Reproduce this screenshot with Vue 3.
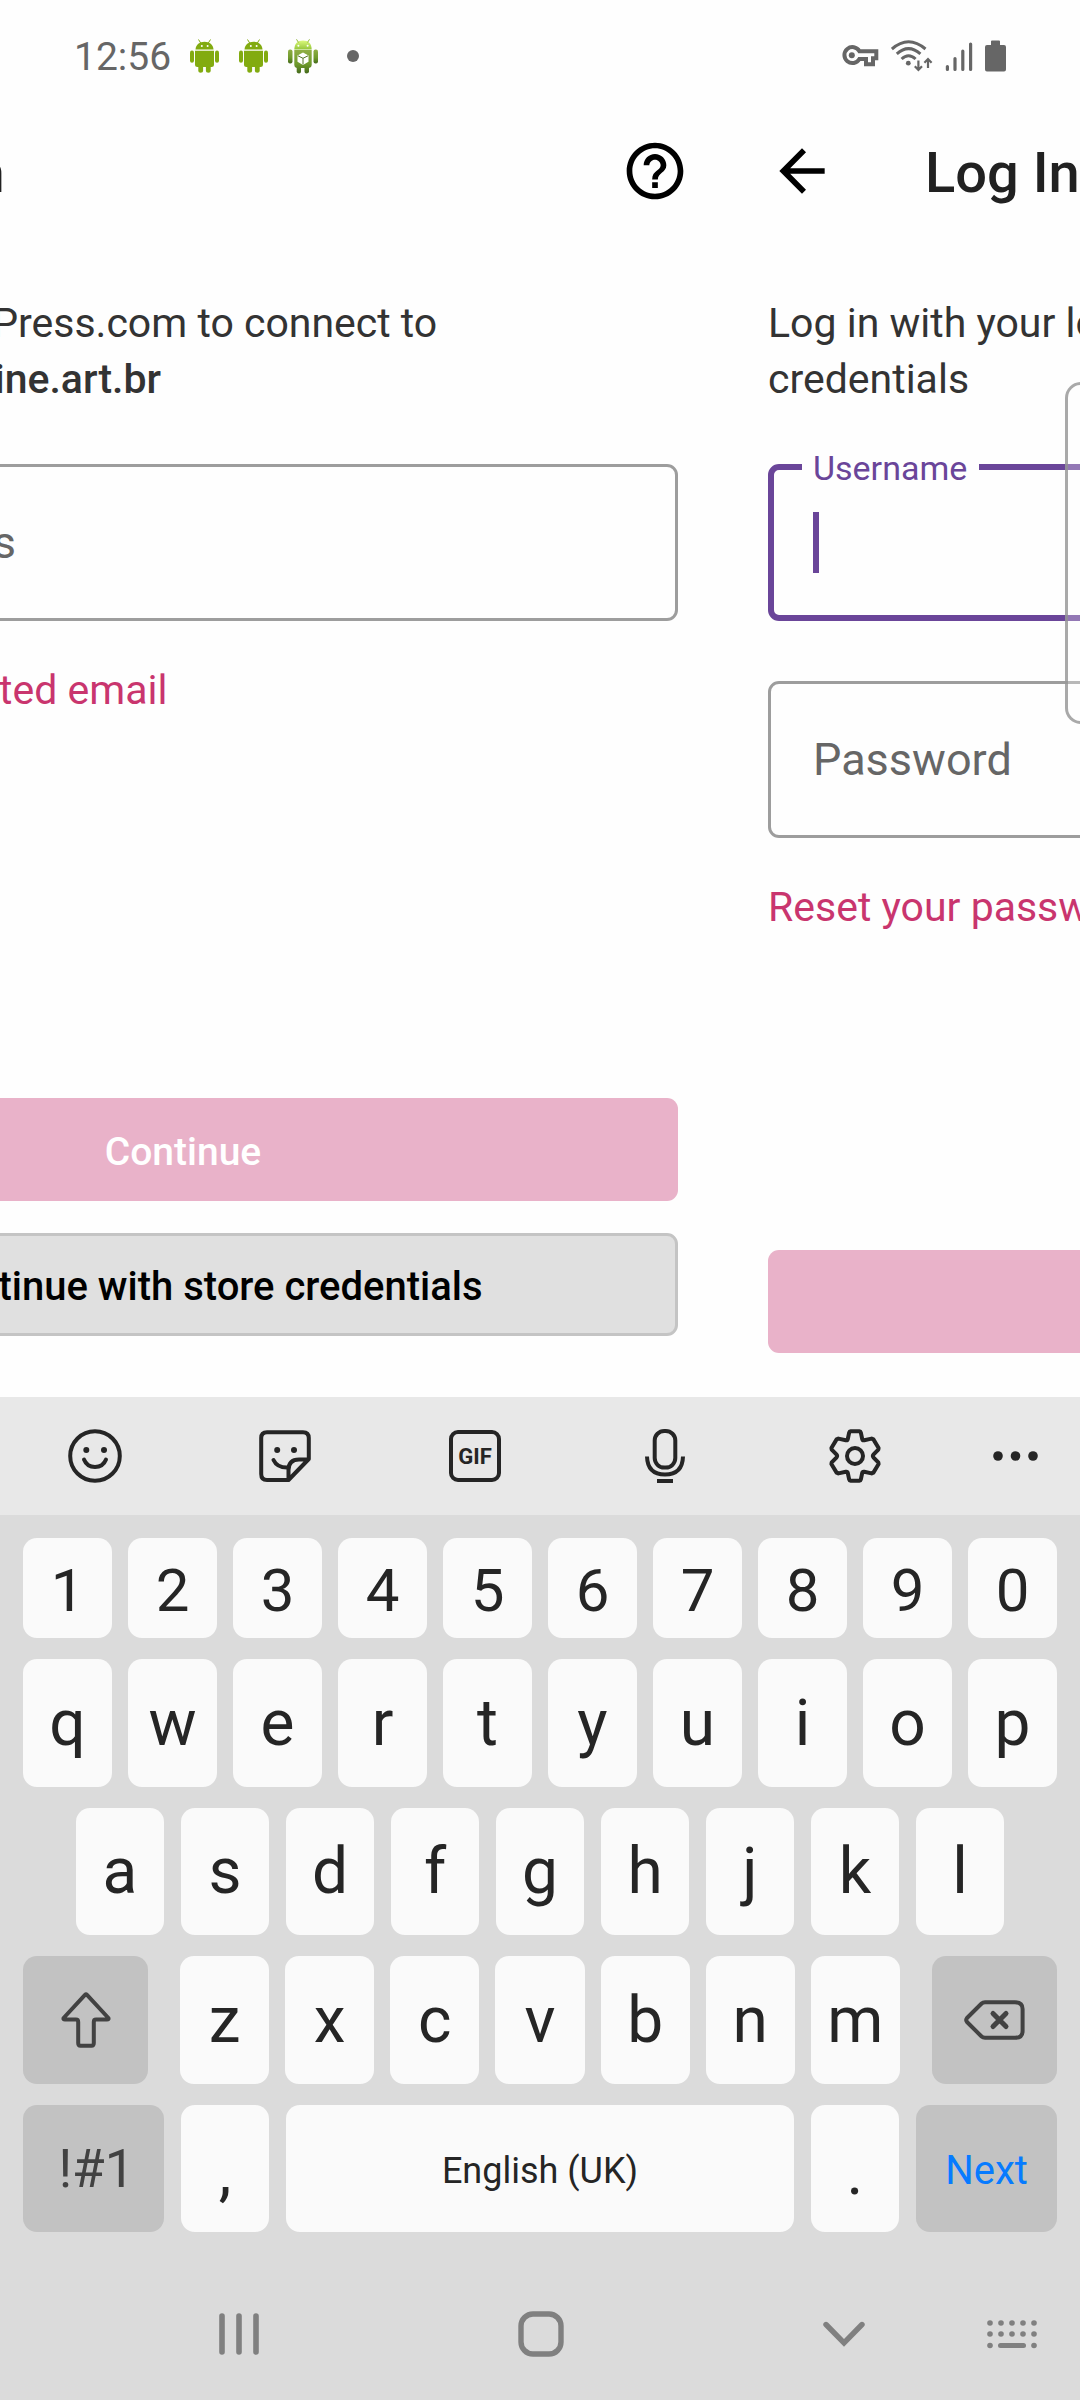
<script setup>
import { ref } from 'vue'

const email = ref('')
const username = ref('')
const password = ref('')

const digits = '1234567890'.split('')
const topRow = 'qwertyuiop'.split('')
const homeRow = 'asdfghjkl'.split('')
const bottomRow = 'zxcvbnm'.split('')
const dotColumns = [3, 14, 25, 36, 47]
</script>

<template>
  <div class="phone">
    <header class="status">
      <time class="clock">12:56</time>
      <svg v-for="n in 2" :key="n" class="droid" viewBox="0 0 30 35" aria-hidden="true">
        <g fill="#82ab10">
          <path d="M5.5 10.6C5.8 5.5 9.5 2.7 14.5 2.7S23.2 5.5 23.5 10.6z" />
          <path d="M5 11.8H24V25.5Q24 28 21.5 28H20.7V32Q20.7 33.8 18.3 33.8T15.9 32V28H13.1V32Q13.1 33.8 10.7 33.8T8.3 32V28H7.5Q5 28 5 25.5z" />
          <rect x="0" y="11.4" width="4" height="12.4" rx="2" />
          <rect x="25" y="11.4" width="4" height="12.4" rx="2" />
        </g>
        <path d="M8.5 .5L11 4.5M20.5 .5L18 4.5" stroke="#82ab10" stroke-width="1" />
        <circle cx="11.8" cy="6.9" r="1" fill="#fff" /><circle cx="17.6" cy="6.9" r="1" fill="#fff" />
      </svg>
      <svg class="droid" viewBox="0 0 30 35" aria-hidden="true">
        <defs>
          <linearGradient id="droid-head" x1="0" y1="0" x2="0" y2="1"><stop offset="0" stop-color="#dcfa7c" /><stop offset="1" stop-color="#94c53a" /></linearGradient>
          <linearGradient id="droid-body" x1="0" y1="0" x2="0" y2="1"><stop offset="0" stop-color="#8fae45" /><stop offset=".6" stop-color="#6f9a2c" /><stop offset="1" stop-color="#456a1c" /></linearGradient>
        </defs>
        <path d="M6.3 10.6C6.5 4.5 9.5 1.5 15 1.5S23.5 4.5 23.7 10.6z" fill="url(#droid-head)" />
        <path d="M6.3 11H23.7V26Q23.7 28.5 21 29V33Q20.5 34.4 18.5 34.4T16.5 32.5V29H13V32.5Q13 34.4 11 34.4T8.7 33V29Q6.3 28.5 6.3 26z" fill="url(#droid-body)" />
        <rect x="0" y="10.5" width="4.5" height="14" rx="2" fill="url(#droid-body)" />
        <rect x="25.5" y="10.5" width="4.5" height="14" rx="2" fill="url(#droid-body)" />
        <path d="M8.5 .3L10.5 3.5M21.5 .3L19.5 3.5" stroke="#94b93c" stroke-width="1" />
        <path d="M15 13.5L20.5 16.5V22.8L15 26L9.5 22.8V16.5z" fill="#fff" />
        <path d="M10 16.8L15 19.3L20 16.8M15 19.3V25.5" stroke="#55752a" stroke-width="1" fill="none" />
        <circle cx="10.4" cy="6.8" r="1" fill="#fff" /><circle cx="19.6" cy="6.8" r="1" fill="#fff" />
      </svg>
      <i class="more-dot"></i>
      <div class="signals">
        <svg width="37" height="22" viewBox="0 0 37 22" aria-hidden="true">
          <path d="M17.4 6.2A8 8 0 1 0 17.4 14H24V19.2H31V13.2H34.3V6.2z" fill="none" stroke="#666" stroke-width="4" />
          <circle cx="9.8" cy="10.2" r="3" fill="#666" />
        </svg>
        <svg width="42" height="32" viewBox="0 0 42 32" fill="none" stroke="#666" aria-hidden="true">
          <g stroke-width="3"><path d="M.9 9Q17.5 -5.5 34.5 9" /><path d="M5.8 13.8Q17.5 3.5 29.4 13.8" /><path d="M10.6 19Q17.5 12.5 24.6 19" /></g>
          <circle cx="17.3" cy="23.2" r="2.4" fill="#666" stroke="none" />
          <path d="M27.4 20.5V29.5M23.8 26.3L27.4 30L31 26.3M37 28V19.5M33.4 22.7L37 19L40.6 22.7" stroke-width="2.2" />
        </svg>
        <svg width="28" height="32" viewBox="0 0 28 32" stroke="#666" stroke-width="3.2" stroke-linecap="round" aria-hidden="true">
          <path d="M2.4 26.5V29.5M10 18.5V29.5M17.8 11V29.5M25.6 4V29.5" />
        </svg>
        <svg width="21" height="32" viewBox="0 0 21 32" fill="#666" aria-hidden="true">
          <path d="M6 1.5Q6 .5 7 .5H14Q15 .5 15 1.5V5H19Q21 5 21 7V29.5Q21 31.5 19 31.5H2Q0 31.5 0 29.5V7Q0 5 2 5H6z" />
        </svg>
      </div>
    </header>

    <!-- Two login steps side by side, caught while sliding from the first to the second -->
    <main class="track">
      <section class="page">
        <div class="bar">
          <h1>Log In</h1>
          <button class="icon-btn" aria-label="Help">
            <svg width="68" height="68" viewBox="0 0 24 24"><path d="M11 18h2v-2h-2v2zm1-16C6.48 2 2 6.48 2 12s4.48 10 10 10 10-4.48 10-10S17.52 2 12 2zm0 18c-4.41 0-8-3.59-8-8s3.59-8 8-8 8 3.59 8 8-3.59 8-8 8zm0-14c-2.21 0-4 1.79-4 4h2c0-1.1.9-2 2-2s2 .9 2 2c0 2-3 1.75-3 5h2c0-2.25 3-2.5 3-5 0-2.21-1.79-4-4-4z" /></svg>
          </button>
        </div>
        <div class="body">
          <p class="lead">Log in with WordPress.com to connect to <strong class="site">ine.art.br</strong></p>
          <div class="field">
            <input id="email" v-model="email" type="email" />
            <label for="email">Email address</label>
          </div>
          <a class="link" href="#">Find your connected email</a>
          <div class="actions first">
            <button class="btn primary">Continue</button>
            <button class="btn secondary">Continue with store credentials</button>
          </div>
        </div>
      </section>

      <section class="page">
        <div class="bar">
          <button class="icon-btn" aria-label="Back">
            <svg width="68" height="68" viewBox="0 0 24 24"><path d="M20 11H7.83l5.59-5.59L12 4l-8 8 8 8 1.41-1.41L7.83 13H20v-2z" /></svg>
          </button>
          <h1>Log In</h1>
        </div>
        <div class="body">
          <p class="lead">Log in with your lo<br />credentials</p>
          <div class="field focused">
            <input id="username" v-model="username" type="text" />
            <label for="username">Username</label>
            <i class="caret"></i>
          </div>
          <div class="field">
            <input id="password" v-model="password" type="password" />
            <label for="password">Password</label>
          </div>
          <a class="link" href="#">Reset your password</a>
          <div class="actions">
            <button class="btn primary" aria-label="Continue"></button>
          </div>
        </div>
      </section>
    </main>

    <aside class="edge-handle"></aside>

    <section class="keyboard">
      <div class="tools">
        <button aria-label="Emoji">
          <svg width="54" height="54" viewBox="0 0 54 54" class="line">
            <circle cx="27" cy="27" r="24.8" /><path d="M16 30.5Q19 38 27 38T38 30.5" stroke-linecap="round" />
            <circle cx="18.3" cy="21" r="3" class="dot" /><circle cx="36" cy="21" r="3" class="dot" />
          </svg>
        </button>
        <button aria-label="Stickers">
          <svg width="52" height="52" viewBox="0 0 52 52" class="line">
            <path d="M29.5 50H8Q2.2 50 2.2 44V8Q2.2 2.2 8 2.2H44Q49.8 2.2 49.8 8V29zM29.5 49V40Q29.5 29.5 40 29.5H49" stroke-linejoin="round" />
            <path d="M14.5 30Q18 37.6 28 37.6" stroke-linecap="round" />
            <circle cx="18.2" cy="20" r="3" class="dot" /><circle cx="35" cy="20" r="3" class="dot" />
          </svg>
        </button>
        <button aria-label="GIFs"><span class="gif">GIF</span></button>
        <button aria-label="Voice input">
          <svg width="40" height="56" viewBox="0 0 40 56" class="line">
            <rect x="9.7" y="3" width="20.6" height="36.6" rx="9.5" /><path d="M2 28.5Q2.5 46.5 20 46.5T38 28.5M12 53H28" />
          </svg>
        </button>
        <button aria-label="Keyboard settings">
          <svg width="52" height="54" viewBox="0 0 52 54" class="line" stroke-linejoin="round">
            <path d="M21.5 2.2H30.5Q31.5 2.2 31.8 3.4L33.2 10Q33.6 11.6 35.2 11.3L42.6 9.6L44.4 10.4L49.6 19L49.3 20.6L44.6 25.4Q43.2 27 44.6 28.6L49.3 33.4L49.6 35L44.4 43.6L42.6 44.4L35.2 42.7Q33.6 42.4 33.2 44L31.8 50.6Q31.5 51.8 30.5 51.8H21.5Q20.5 51.8 20.2 50.6L18.8 44Q18.4 42.4 16.8 42.7L9.4 44.4L7.6 43.6L2.4 35L2.7 33.4L7.4 28.6Q8.8 27 7.4 25.4L2.7 20.6L2.4 19L7.6 10.4L9.4 9.6L16.8 11.3Q18.4 11.6 18.8 10L20.2 3.4Q20.5 2.2 21.5 2.2z" />
            <circle cx="26" cy="27" r="8" />
          </svg>
        </button>
        <button class="overflow" aria-label="More">
          <svg width="45" height="10" viewBox="0 0 45 10" fill="#252525"><circle cx="5" cy="5" r="4.8" /><circle cx="22.5" cy="5" r="4.8" /><circle cx="40" cy="5" r="4.8" /></svg>
        </button>
      </div>

      <div class="keys">
        <div class="row digits"><button v-for="k in digits" :key="k" class="key">{{ k }}</button></div>
        <div class="row wide"><button v-for="k in topRow" :key="k" class="key">{{ k }}</button></div>
        <div class="row home"><button v-for="k in homeRow" :key="k" class="key">{{ k }}</button></div>
        <div class="row shifted">
          <button class="key dark side" aria-label="Shift">
            <svg width="50" height="56" viewBox="0 0 50 56" class="line grey" stroke-linejoin="round"><path d="M24 2.8Q25 1.8 26 2.8L47.4 26Q48 27.6 46 27.6H35Q32.8 27.6 32.8 30V51Q32.8 53.7 30.5 53.7H19.5Q17.2 53.7 17.2 51V30Q17.2 27.6 15 27.6H4Q2 27.6 2.6 26z" /></svg>
          </button>
          <div class="letters"><button v-for="k in bottomRow" :key="k" class="key">{{ k }}</button></div>
          <button class="key dark side" aria-label="Backspace">
            <svg width="61" height="40" viewBox="0 0 61 40" class="line grey" stroke-linejoin="round"><path d="M21 2.2H51Q58.6 2.2 58.6 9V31Q58.6 37.8 51 37.8H21Q19 37.8 17.6 36.5L3 22Q1.4 20 3 18L17.6 3.5Q19 2.2 21 2.2z" /><path d="M29 13.5L42 26.5M42 13.5L29 26.5" stroke-linecap="round" stroke-width="5" /></svg>
          </button>
        </div>
        <div class="row last">
          <button class="key dark symbols">!#1</button>
          <button class="key mark">,</button>
          <button class="key space">English (UK)</button>
          <button class="key mark">.</button>
          <button class="key dark next">Next</button>
        </div>
      </div>

      <nav class="nav">
        <div class="nav-main">
          <button aria-label="Recent apps"><svg width="40" height="44" viewBox="0 0 40 44" stroke="#808080" stroke-width="5.6" stroke-linecap="round"><path d="M3 4V40M20 4V40M37 4V40" /></svg></button>
          <button aria-label="Home"><svg width="46" height="46" viewBox="0 0 46 46" fill="none" stroke="#808080" stroke-width="5.4"><rect x="3" y="3" width="40" height="40" rx="12" /></svg></button>
          <button aria-label="Hide keyboard"><svg width="42" height="26" viewBox="0 0 42 26" fill="none" stroke="#808080" stroke-width="5.4" stroke-linecap="round"><path d="M3 3.5L21 22L39 3.5" /></svg></button>
        </div>
        <button class="switcher" aria-label="Switch keyboard">
          <svg width="50" height="30" viewBox="0 0 50 30" fill="#808080">
            <template v-for="x in dotColumns" :key="x"><circle :cx="x" cy="4" r="2.8" /><circle :cx="x" cy="15" r="2.8" /></template>
            <circle cx="3" cy="26.5" r="2.8" /><rect x="11" y="24" width="28" height="5" rx="2.5" /><circle cx="47" cy="26.5" r="2.8" />
          </svg>
        </button>
      </nav>
    </section>
  </div>
</template>

<style>
body { margin: 0; background: #fefefe; }
</style>

<style scoped>
* { box-sizing: border-box; }
.phone {
  position: relative;
  display: flex;
  flex-direction: column;
  min-height: 100vh;
  overflow: hidden;
  font-family: Roboto, "Liberation Sans", sans-serif;
  background: #fefefe;
}
button {
  display: flex;
  align-items: center;
  justify-content: center;
  margin: 0;
  padding: 0;
  border: 0;
  background: none;
  font-family: inherit;
}
svg { display: block; flex: none; }

.status { display: flex; align-items: center; height: 92px; padding: 20px 74px 0 74px; gap: 19px; }
.clock { padding-top: 2px; font-size: 39px; line-height: 48px; color: #666; }
.droid { width: 30px; height: 35px; }
.more-dot { width: 12px; height: 12px; margin-left: 10px; border-radius: 50%; background: #666; }
.signals { display: flex; align-items: center; gap: 12px; margin-left: auto; }

.track { display: flex; flex: 1; margin-left: -357px; }
.page { display: flex; flex-direction: column; flex: 0 0 100vw; }
.bar { display: flex; align-items: center; height: 157px; padding: 0 34px 0 45px; }
.bar h1 { margin: 0; padding-top: 5px; font-size: 56px; line-height: 64px; font-weight: 500; color: #212121; white-space: nowrap; }
.page:first-child h1 { margin-left: 162px; }
.page:first-child .icon-btn { margin-left: auto; }
.page:last-child h1 { margin-left: 89px; }
.body { display: flex; flex-direction: column; flex: 1; padding: 46px 45px 44px; }
.lead { margin: 0 0 57px; font-size: 41px; line-height: 56px; color: #333; white-space: nowrap; }
.site { display: block; width: 473px; text-align: right; font-weight: 500; }

.field { position: relative; display: flex; height: 157px; margin-bottom: 60px; }
.field input {
  flex: 1;
  min-width: 0;
  padding: 0 42px;
  border: 3px solid #9d9d9d;
  border-radius: 11px;
  outline: 0;
  background: none;
  font: 45px Roboto, sans-serif;
}
.field label { position: absolute; top: 0; left: 45px; font-size: 45px; line-height: 157px; color: #666; }
.field.focused input { border: 6px solid #6a4599; }
.field.focused label { top: -20px; left: 34px; padding: 0 12px 0 11px; font-size: 34px; line-height: 48px; color: #6a4599; background: #fefefe; }
.caret { position: absolute; top: 48px; left: 45px; width: 6px; height: 61px; background: #6a4599; }
.link { margin-top: -19px; font-size: 41px; line-height: 56px; color: #c9356e; text-decoration: none; white-space: nowrap; }

.actions { display: flex; flex-direction: column; gap: 32px; margin-top: auto; }
.actions.first { margin-bottom: 17px; }
.btn { height: 103px; padding-top: 4px; border-radius: 11px; font-size: 39px; font-weight: 500; }
.primary { background: #e9b2c9; color: #fff; }
.secondary { padding-left: 44px; border: 3px solid #c4c4c4; background: #e0e0e0; font-size: 40px; color: #000; }

.edge-handle {
  position: absolute;
  top: 382px;
  right: -45px;
  width: 60px;
  height: 342px;
  border: 3px solid rgba(145, 145, 145, .78);
  border-radius: 16px;
  background: rgba(255, 255, 255, .28);
}

.keyboard { background: #dbdbdb; }
.tools { display: flex; height: 118px; background: #e8e8e8; }
.tools button { flex: 19; }
.tools .overflow { flex: 13; }
.line { fill: none; stroke: #252525; stroke-width: 4; }
.line .dot { fill: #252525; stroke: none; }
.grey { stroke: #424242; }
.gif { width: 52px; height: 52px; border: 4px solid #252525; border-radius: 9px; font-size: 22px; line-height: 45px; font-weight: 700; color: #252525; text-align: center; }

.keys { display: flex; flex-direction: column; gap: 21px; padding: 23px 23px 36px; }
.row { display: flex; gap: 17px; height: 128px; }
.row.wide { gap: 16px; }
.row.digits { height: 100px; gap: 16px; }
.row.home { height: 127px; padding: 0 53px; }
.row.last { height: 127px; }
.row.shifted { gap: 32px; }
.letters { display: flex; flex: 720; gap: 16px; }
.key { flex: 88; min-width: 0; border-radius: 14px; background: #fafafa; font-size: 64px; color: #252525; }
.digits .key { padding-top: 4px; font-size: 60px; }
.dark { background: #c2c2c2; }
.side { flex: 125; }
.symbols { flex: 141; font-size: 53px; text-indent: 6px; color: #424242; }
.mark { padding-top: 8px; }
.space { flex: 508; padding-top: 4px; font-size: 36px; }
.next { flex: 141; padding-top: 4px; font-size: 40px; color: #077bff; }

.nav { display: flex; align-items: center; height: 132px; padding: 0 43px 0 219px; }
.nav-main { display: flex; flex: 1; align-items: center; justify-content: space-between; }
.switcher { margin-left: 122px; }
</style>
